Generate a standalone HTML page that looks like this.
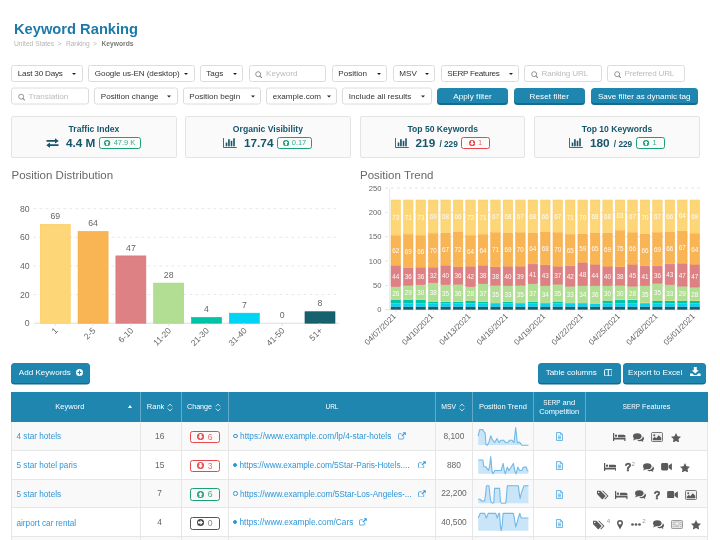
<!DOCTYPE html>
<html lang="en"><head><meta charset="utf-8"><title>Keyword Ranking</title>
<style>
*{box-sizing:border-box;margin:0;padding:0}
html,body{width:720px;height:540px;overflow:hidden;background:#fff}
body{font-family:"Liberation Sans",sans-serif;position:relative;color:#444}
.abs{position:absolute}
#w{position:absolute;left:0;top:0;width:720px;height:540px;overflow:hidden;will-change:transform}
.icn{position:absolute;line-height:0}
.icn svg{display:block}
.title{left:14px;top:18.5px;font-size:14.7px;font-weight:bold;color:#1b7aa9;line-height:20px;white-space:nowrap}
.crumb{left:14px;top:39px;font-size:6.7px;color:#b5b5b5;line-height:9px;white-space:pre}
.crumb b{color:#7a7a7a;font-weight:bold}
.fb{position:absolute;height:17px;border:1px solid #dcdcdc;border-radius:2.5px;background:#fff;font-size:8.1px;line-height:16.700px;color:#333;white-space:nowrap;padding-left:5.8px}
.fb i{position:absolute;right:5.4px;top:6.900px;width:0;height:0;border-left:2.4px solid transparent;border-right:2.4px solid transparent;border-top:2.8px solid #222}
.fb.in{color:#bbb;padding-left:16.5px}
.fb.in svg{position:absolute;left:5.600px;top:4.700px}
.btn{position:absolute;height:17px;border-radius:3.500px;background:#1f86b0;box-shadow:0 1.5px 0 #166a8d;color:#fff;font-size:8.100px;line-height:16px;text-align:center;white-space:nowrap}
.kpi{position:absolute;top:116px;height:41.5px;width:165.4px;border:1px solid #e4e4e4;border-radius:2px;background:#fafafa}
.kpi .t{position:absolute;left:0;right:0;top:7px;text-align:center;font-size:8.6px;font-weight:bold;color:#16566a;line-height:10px}
.kpi .v{position:absolute;left:0;right:0;top:19px;height:14px;text-align:center;white-space:nowrap;font-size:0}
.kpi .v>*{display:inline-block;vertical-align:middle}
.kpi .num{font-size:11.8px;font-weight:bold;color:#16566a;line-height:14px}
.kpi .sub{font-size:8.3px;font-weight:bold;color:#16566a;line-height:14px;margin-left:4.2px;position:relative;top:1px}
.bdg{display:inline-block;height:11.5px;border:1.4px solid #1aa179;border-radius:2.5px;color:#35ad8c;font-size:7.5px;line-height:10.300px;padding:0 5px 0 4.500px;margin-left:3.5px;background:transparent;white-space:nowrap;min-width:29px;text-align:center}
.bdg svg{vertical-align:middle;margin-right:3px;position:relative;top:-0.5px}
.bdg.r{border-color:#e8474c;color:#ec6a6e}
.bdg.g{border-color:#555;color:#888}
.h2{position:absolute;font-size:11.500px;color:#686868;line-height:14px;white-space:nowrap}
.th{color:#fff;font-size:7.5px;line-height:30px;text-align:center;white-space:nowrap}
.td{font-size:8.1px;line-height:12px;white-space:nowrap}
</style></head>
<body>
<div id="w">
<div class="abs title">Keyword Ranking</div>
<div class="abs crumb">United States</div><div class="abs crumb" style="left:57.5px">&gt;</div><div class="abs crumb" style="left:66px;letter-spacing:-0.15px">Ranking</div><div class="abs crumb" style="left:93px">&gt;</div><div class="abs crumb" style="left:101.5px"><b>Keywords</b></div>
<div class="fb" style="left:11.0px;top:65px;width:71.5px"><span style="letter-spacing:-0.2px">Last 30 Days</span><i></i></div>
<div class="fb" style="left:88.0px;top:65px;width:106.5px"><span style="letter-spacing:-0.09px">Google us-EN (desktop)</span><i></i></div>
<div class="fb" style="left:199.5px;top:65px;width:43.5px">Tags<i></i></div>
<div class="fb in" style="left:248.5px;top:65px;width:77.5px"><svg width="7.4" height="7.4" viewBox="0 0 14 14"><circle cx="6" cy="6" r="4.7" fill="none" stroke="#888" stroke-width="1.7"/><path d="M9.6 9.6L13 13" stroke="#888" stroke-width="2" stroke-linecap="round"/></svg>Keyword</div>
<div class="fb" style="left:331.5px;top:65px;width:55.5px">Position<i></i></div>
<div class="fb" style="left:392.5px;top:65px;width:42.5px">MSV<i></i></div>
<div class="fb" style="left:440.5px;top:65px;width:78.5px"><span style="letter-spacing:-0.300px">SERP Features</span><i></i></div>
<div class="fb in" style="left:524.0px;top:65px;width:78.0px"><svg width="7.4" height="7.4" viewBox="0 0 14 14"><circle cx="6" cy="6" r="4.7" fill="none" stroke="#888" stroke-width="1.7"/><path d="M9.6 9.6L13 13" stroke="#888" stroke-width="2" stroke-linecap="round"/></svg><span style="letter-spacing:-0.150px">Ranking URL</span></div>
<div class="fb in" style="left:607.0px;top:65px;width:78.0px"><svg width="7.4" height="7.4" viewBox="0 0 14 14"><circle cx="6" cy="6" r="4.7" fill="none" stroke="#888" stroke-width="1.7"/><path d="M9.6 9.6L13 13" stroke="#888" stroke-width="2" stroke-linecap="round"/></svg><span style="letter-spacing:-0.200px">Preferred URL</span></div>
<div class="fb in" style="left:11.0px;top:87px;width:77.5px;transform:translateY(0.5px)"><svg width="7.4" height="7.4" viewBox="0 0 14 14"><circle cx="6" cy="6" r="4.7" fill="none" stroke="#888" stroke-width="1.7"/><path d="M9.6 9.6L13 13" stroke="#888" stroke-width="2" stroke-linecap="round"/></svg>Translation</div>
<div class="fb" style="left:94.0px;top:87px;width:83.5px;transform:translateY(0.5px)">Position change<i></i></div>
<div class="fb" style="left:182.5px;top:87px;width:78.5px;transform:translateY(0.5px)">Position begin<i></i></div>
<div class="fb" style="left:266.0px;top:87px;width:71.0px;transform:translateY(0.5px)">example.com<i></i></div>
<div class="fb" style="left:342.0px;top:87px;width:89.5px;transform:translateY(0.5px)">Include all results<i></i></div>
<div class="btn" style="left:437.0px;top:88px;width:71.0px;height:15px;line-height:17px;box-shadow:0 2px 0 #166a8d"><span style="letter-spacing:0.050px">Apply filter</span></div>
<div class="btn" style="left:514.0px;top:88px;width:70.5px;height:15px;line-height:17px;box-shadow:0 2px 0 #166a8d"><span style="letter-spacing:0.050px">Reset filter</span></div>
<div class="btn" style="left:591.0px;top:88px;width:106.5px;height:15px;line-height:17px;box-shadow:0 2px 0 #166a8d">Save filter as dynamic tag</div>
<div class="kpi" style="left:11.2px"><div class="t">Traffic Index</div><div class="v"><svg width="13" height="10" viewBox="0 0 26 20"><path d="M1 4H18V0.500L25.500 5.750 18 11V7.500H1zM25 12.500H8V9L0.500 14.250 8 19.500V16H25z" fill="#16566a"/></svg><span class="num" style="margin-left:6.5px">4.4 M</span><span class="bdg "><svg width="6.2" height="6.2" viewBox="0 0 14 14"><circle cx="7" cy="7" r="7" fill="#1aa179"/><path d="M7 2L12 7H9.200V12H4.800V7H2Z" fill="#fff" transform="rotate(0 7 7)"/></svg>47.9 K</span></div></div>
<div class="kpi" style="left:185.2px"><div class="t">Organic Visibility</div><div class="v"><svg width="14" height="10" viewBox="0 0 28 20"><path d="M1 0V19H27.500" fill="none" stroke="#16566a" stroke-width="1.700"/><rect x="5.400" y="9" width="3.200" height="7.600" fill="#16566a"/><rect x="10.200" y="2.400" width="3.300" height="14.200" fill="#16566a"/><rect x="15.400" y="5.600" width="3.200" height="11" fill="#16566a"/><rect x="20.400" y="0.600" width="3.200" height="16" fill="#16566a"/></svg><span class="num" style="margin-left:6.5px">17.74</span><span class="bdg "><svg width="6.2" height="6.2" viewBox="0 0 14 14"><circle cx="7" cy="7" r="7" fill="#1aa179"/><path d="M7 2L12 7H9.200V12H4.800V7H2Z" fill="#fff" transform="rotate(0 7 7)"/></svg>0.17</span></div></div>
<div class="kpi" style="left:360.0px"><div class="t">Top 50 Keywords</div><div class="v"><svg width="14" height="10" viewBox="0 0 28 20"><path d="M1 0V19H27.500" fill="none" stroke="#16566a" stroke-width="1.700"/><rect x="5.400" y="9" width="3.200" height="7.600" fill="#16566a"/><rect x="10.200" y="2.400" width="3.300" height="14.200" fill="#16566a"/><rect x="15.400" y="5.600" width="3.200" height="11" fill="#16566a"/><rect x="20.400" y="0.600" width="3.200" height="16" fill="#16566a"/></svg><span class="num" style="margin-left:6.5px">219</span><span class="sub">/ 229</span><span class="bdg r"><svg width="6.2" height="6.2" viewBox="0 0 14 14"><circle cx="7" cy="7" r="7" fill="#e8474c"/><path d="M7 2L12 7H9.200V12H4.800V7H2Z" fill="#fff" transform="rotate(180 7 7)"/></svg>1</span></div></div>
<div class="kpi" style="left:534.4px"><div class="t">Top 10 Keywords</div><div class="v"><svg width="14" height="10" viewBox="0 0 28 20"><path d="M1 0V19H27.500" fill="none" stroke="#16566a" stroke-width="1.700"/><rect x="5.400" y="9" width="3.200" height="7.600" fill="#16566a"/><rect x="10.200" y="2.400" width="3.300" height="14.200" fill="#16566a"/><rect x="15.400" y="5.600" width="3.200" height="11" fill="#16566a"/><rect x="20.400" y="0.600" width="3.200" height="16" fill="#16566a"/></svg><span class="num" style="margin-left:6.5px">180</span><span class="sub">/ 229</span><span class="bdg "><svg width="6.2" height="6.2" viewBox="0 0 14 14"><circle cx="7" cy="7" r="7" fill="#1aa179"/><path d="M7 2L12 7H9.200V12H4.800V7H2Z" fill="#fff" transform="rotate(0 7 7)"/></svg>1</span></div></div>
<div class="h2" style="left:11.5px;top:167.700px">Position Distribution</div>
<div class="h2" style="left:360px;top:167.700px">Position Trend</div>
<svg class="abs" style="left:0;top:185px" width="360" height="170" viewBox="0 185 360 170" font-family='"Liberation Sans", sans-serif'><line x1="33.3" x2="339" y1="294.56" y2="294.56" stroke="#e9e9e9" stroke-width="1" stroke-dasharray="3 3"/><line x1="33.3" x2="339" y1="265.93" y2="265.93" stroke="#e9e9e9" stroke-width="1" stroke-dasharray="3 3"/><line x1="33.3" x2="339" y1="237.29" y2="237.29" stroke="#e9e9e9" stroke-width="1" stroke-dasharray="3 3"/><line x1="33.3" x2="339" y1="208.65" y2="208.65" stroke="#e9e9e9" stroke-width="1" stroke-dasharray="3 3"/><line x1="34" x2="339" y1="323.2" y2="323.2" stroke="#ddd" stroke-width="1"/><text x="29.6" y="326.30" text-anchor="end" font-size="8.7" fill="#666">0</text><text x="29.6" y="297.66" text-anchor="end" font-size="8.7" fill="#666">20</text><text x="29.6" y="269.03" text-anchor="end" font-size="8.7" fill="#666">40</text><text x="29.6" y="240.39" text-anchor="end" font-size="8.7" fill="#666">60</text><text x="29.6" y="211.75" text-anchor="end" font-size="8.7" fill="#666">80</text><rect x="40.25" y="224.40" width="30" height="98.80" fill="#fdd678" stroke="#fbc95a" stroke-width="0.6"/><text x="55.25" y="219.10" text-anchor="middle" font-size="8.7" fill="#666">69</text><line x1="55.25" x2="55.25" y1="323.2" y2="325.7" stroke="#ddd" stroke-width="1"/><text transform="translate(58.25,331.20) rotate(-45)" text-anchor="end" font-size="8.5" fill="#666">1</text><rect x="78.07" y="231.56" width="30" height="91.64" fill="#f9b454" stroke="#f5a435" stroke-width="0.6"/><text x="93.07" y="226.26" text-anchor="middle" font-size="8.7" fill="#666">64</text><line x1="93.07" x2="93.07" y1="323.2" y2="325.7" stroke="#ddd" stroke-width="1"/><text transform="translate(96.07,331.20) rotate(-45)" text-anchor="end" font-size="8.5" fill="#666">2-5</text><rect x="115.89" y="255.90" width="30" height="67.30" fill="#de8184" stroke="#d66e72" stroke-width="0.6"/><text x="130.89" y="250.60" text-anchor="middle" font-size="8.7" fill="#666">47</text><line x1="130.89" x2="130.89" y1="323.2" y2="325.7" stroke="#ddd" stroke-width="1"/><text transform="translate(133.89,331.20) rotate(-45)" text-anchor="end" font-size="8.5" fill="#666">6-10</text><rect x="153.71" y="283.11" width="30" height="40.09" fill="#b1de93" stroke="#a0d57d" stroke-width="0.6"/><text x="168.71" y="277.81" text-anchor="middle" font-size="8.7" fill="#666">28</text><line x1="168.71" x2="168.71" y1="323.2" y2="325.7" stroke="#ddd" stroke-width="1"/><text transform="translate(171.71,331.20) rotate(-45)" text-anchor="end" font-size="8.5" fill="#666">11-20</text><rect x="191.53" y="317.47" width="30" height="5.73" fill="#00c3a7" stroke="#00b79c" stroke-width="0.6"/><text x="206.53" y="312.17" text-anchor="middle" font-size="8.7" fill="#666">4</text><line x1="206.53" x2="206.53" y1="323.2" y2="325.7" stroke="#ddd" stroke-width="1"/><text transform="translate(209.53,331.20) rotate(-45)" text-anchor="end" font-size="8.5" fill="#666">21-30</text><rect x="229.35" y="313.18" width="30" height="10.02" fill="#00d4f4" stroke="#00c6e6" stroke-width="0.6"/><text x="244.35" y="307.88" text-anchor="middle" font-size="8.7" fill="#666">7</text><line x1="244.35" x2="244.35" y1="323.2" y2="325.7" stroke="#ddd" stroke-width="1"/><text transform="translate(247.35,331.20) rotate(-45)" text-anchor="end" font-size="8.5" fill="#666">31-40</text><text x="282.17" y="317.90" text-anchor="middle" font-size="8.7" fill="#666">0</text><line x1="282.17" x2="282.17" y1="323.2" y2="325.7" stroke="#ddd" stroke-width="1"/><text transform="translate(285.17,331.20) rotate(-45)" text-anchor="end" font-size="8.5" fill="#666">41-50</text><rect x="304.99" y="311.75" width="30" height="11.45" fill="#17616f" stroke="#12505c" stroke-width="0.6"/><text x="319.99" y="306.44" text-anchor="middle" font-size="8.7" fill="#666">8</text><line x1="319.99" x2="319.99" y1="323.2" y2="325.7" stroke="#ddd" stroke-width="1"/><text transform="translate(322.99,331.20) rotate(-45)" text-anchor="end" font-size="8.5" fill="#666">51+</text></svg>
<svg class="abs" style="left:355px;top:180px" width="365" height="175" viewBox="355 180 365 175" font-family='"Liberation Sans", sans-serif'><line x1="385" x2="700" y1="285.36" y2="285.36" stroke="#dfe4ec" stroke-width="1" stroke-dasharray="3 3"/><line x1="385" x2="700" y1="261.02" y2="261.02" stroke="#dfe4ec" stroke-width="1" stroke-dasharray="3 3"/><line x1="385" x2="700" y1="236.68" y2="236.68" stroke="#dfe4ec" stroke-width="1" stroke-dasharray="3 3"/><line x1="385" x2="700" y1="212.34" y2="212.34" stroke="#dfe4ec" stroke-width="1" stroke-dasharray="3 3"/><line x1="385" x2="700" y1="188.00" y2="188.00" stroke="#dfe4ec" stroke-width="1" stroke-dasharray="3 3"/><line x1="389.7" x2="389.7" y1="188" y2="309.7" stroke="#e3e8ee" stroke-width="1"/><line x1="385" x2="700" y1="309.7" y2="309.7" stroke="#e3e3e3" stroke-width="1"/><text x="381.5" y="312.30" text-anchor="end" font-size="7.6" fill="#666">0</text><text x="381.5" y="287.96" text-anchor="end" font-size="7.6" fill="#666">50</text><text x="381.5" y="263.62" text-anchor="end" font-size="7.6" fill="#666">100</text><text x="381.5" y="239.28" text-anchor="end" font-size="7.6" fill="#666">150</text><text x="381.5" y="214.94" text-anchor="end" font-size="7.6" fill="#666">200</text><text x="381.5" y="190.60" text-anchor="end" font-size="7.6" fill="#666">250</text><rect x="390.80" y="306.49" width="10" height="3.21" fill="#17616f"/><rect x="390.80" y="303.47" width="10" height="3.02" fill="#00d4f4"/><rect x="390.80" y="299.53" width="10" height="3.94" fill="#00c3a7"/><rect x="391.05" y="287.12" width="9.500" height="12.16" fill="#b1de93" stroke="#a1d681" stroke-width="0.500"/><rect x="390.80" y="298.83" width="10" height="0.7" fill="#dfe28f"/><text x="395.80" y="296.00" text-anchor="middle" font-size="6.3" fill="#fff" fill-opacity="0.95">26</text><rect x="391.05" y="265.70" width="9.500" height="20.92" fill="#de8184" stroke="#d86f73" stroke-width="0.500"/><text x="395.80" y="278.96" text-anchor="middle" font-size="6.3" fill="#fff" fill-opacity="0.95">44</text><rect x="391.05" y="235.52" width="9.500" height="29.68" fill="#f9b454" stroke="#f6a63c" stroke-width="0.500"/><text x="395.80" y="253.16" text-anchor="middle" font-size="6.3" fill="#fff" fill-opacity="0.95">62</text><rect x="391.05" y="199.98" width="9.500" height="35.04" fill="#fdd678" stroke="#fbc95c" stroke-width="0.500"/><text x="395.80" y="220.30" text-anchor="middle" font-size="6.3" fill="#fff" fill-opacity="0.95">73</text><line x1="395.80" x2="395.80" y1="309.7" y2="312.2" stroke="#e3e3e3" stroke-width="1"/><text transform="translate(396.50,316.90) rotate(-45)" text-anchor="end" font-size="8.100" fill="#666">04/07/2021</text><rect x="403.26" y="306.49" width="10" height="3.21" fill="#17616f"/><rect x="403.26" y="303.47" width="10" height="3.02" fill="#00d4f4"/><rect x="403.26" y="299.53" width="10" height="3.94" fill="#00c3a7"/><rect x="403.51" y="285.66" width="9.500" height="13.62" fill="#b1de93" stroke="#a1d681" stroke-width="0.500"/><rect x="403.26" y="298.83" width="10" height="0.7" fill="#dfe28f"/><text x="408.26" y="295.27" text-anchor="middle" font-size="6.3" fill="#fff" fill-opacity="0.95">29</text><rect x="403.51" y="268.13" width="9.500" height="17.02" fill="#de8184" stroke="#d86f73" stroke-width="0.500"/><text x="408.26" y="279.45" text-anchor="middle" font-size="6.3" fill="#fff" fill-opacity="0.95">36</text><rect x="403.51" y="234.54" width="9.500" height="33.09" fill="#f9b454" stroke="#f6a63c" stroke-width="0.500"/><text x="408.26" y="253.89" text-anchor="middle" font-size="6.3" fill="#fff" fill-opacity="0.95">69</text><rect x="403.51" y="199.98" width="9.500" height="34.06" fill="#fdd678" stroke="#fbc95c" stroke-width="0.500"/><text x="408.26" y="219.81" text-anchor="middle" font-size="6.3" fill="#fff" fill-opacity="0.95">71</text><rect x="415.72" y="306.49" width="10" height="3.21" fill="#17616f"/><rect x="415.72" y="303.47" width="10" height="3.02" fill="#00d4f4"/><rect x="415.72" y="299.53" width="10" height="3.94" fill="#00c3a7"/><rect x="415.97" y="285.17" width="9.500" height="14.10" fill="#b1de93" stroke="#a1d681" stroke-width="0.500"/><rect x="415.72" y="298.83" width="10" height="0.7" fill="#dfe28f"/><text x="420.72" y="295.02" text-anchor="middle" font-size="6.3" fill="#fff" fill-opacity="0.95">30</text><rect x="415.97" y="267.65" width="9.500" height="17.02" fill="#de8184" stroke="#d86f73" stroke-width="0.500"/><text x="420.72" y="278.96" text-anchor="middle" font-size="6.3" fill="#fff" fill-opacity="0.95">36</text><rect x="415.97" y="235.52" width="9.500" height="31.63" fill="#f9b454" stroke="#f6a63c" stroke-width="0.500"/><text x="420.72" y="254.13" text-anchor="middle" font-size="6.3" fill="#fff" fill-opacity="0.95">66</text><rect x="415.97" y="199.98" width="9.500" height="35.04" fill="#fdd678" stroke="#fbc95c" stroke-width="0.500"/><text x="420.72" y="220.30" text-anchor="middle" font-size="6.3" fill="#fff" fill-opacity="0.95">73</text><rect x="428.17" y="306.49" width="10" height="3.21" fill="#17616f"/><rect x="428.17" y="303.47" width="10" height="3.02" fill="#00d4f4"/><rect x="428.17" y="301.47" width="10" height="2.00" fill="#00c3a7"/><rect x="428.42" y="283.22" width="9.500" height="18.00" fill="#b1de93" stroke="#a1d681" stroke-width="0.500"/><rect x="428.17" y="300.77" width="10" height="0.7" fill="#dfe28f"/><text x="433.17" y="295.02" text-anchor="middle" font-size="6.3" fill="#fff" fill-opacity="0.95">38</text><rect x="428.42" y="267.65" width="9.500" height="15.08" fill="#de8184" stroke="#d86f73" stroke-width="0.500"/><text x="433.17" y="277.99" text-anchor="middle" font-size="6.3" fill="#fff" fill-opacity="0.95">32</text><rect x="428.42" y="233.57" width="9.500" height="33.58" fill="#f9b454" stroke="#f6a63c" stroke-width="0.500"/><text x="433.17" y="253.16" text-anchor="middle" font-size="6.3" fill="#fff" fill-opacity="0.95">70</text><rect x="428.42" y="199.98" width="9.500" height="33.09" fill="#fdd678" stroke="#fbc95c" stroke-width="0.500"/><text x="433.17" y="219.33" text-anchor="middle" font-size="6.3" fill="#fff" fill-opacity="0.95">69</text><line x1="433.17" x2="433.17" y1="309.7" y2="312.2" stroke="#e3e3e3" stroke-width="1"/><text transform="translate(433.87,316.90) rotate(-45)" text-anchor="end" font-size="8.100" fill="#666">04/10/2021</text><rect x="440.63" y="306.49" width="10" height="3.21" fill="#17616f"/><rect x="440.63" y="303.47" width="10" height="3.02" fill="#00d4f4"/><rect x="440.63" y="301.96" width="10" height="1.51" fill="#00c3a7"/><rect x="440.88" y="285.17" width="9.500" height="16.54" fill="#b1de93" stroke="#a1d681" stroke-width="0.500"/><rect x="440.63" y="301.26" width="10" height="0.7" fill="#dfe28f"/><text x="445.63" y="296.24" text-anchor="middle" font-size="6.3" fill="#fff" fill-opacity="0.95">35</text><rect x="440.88" y="265.70" width="9.500" height="18.97" fill="#de8184" stroke="#d86f73" stroke-width="0.500"/><text x="445.63" y="277.99" text-anchor="middle" font-size="6.3" fill="#fff" fill-opacity="0.95">40</text><rect x="440.88" y="233.08" width="9.500" height="32.12" fill="#f9b454" stroke="#f6a63c" stroke-width="0.500"/><text x="445.63" y="251.94" text-anchor="middle" font-size="6.3" fill="#fff" fill-opacity="0.95">67</text><rect x="440.88" y="199.98" width="9.500" height="32.60" fill="#fdd678" stroke="#fbc95c" stroke-width="0.500"/><text x="445.63" y="219.08" text-anchor="middle" font-size="6.3" fill="#fff" fill-opacity="0.95">68</text><rect x="453.09" y="306.49" width="10" height="3.21" fill="#17616f"/><rect x="453.09" y="303.47" width="10" height="3.02" fill="#00d4f4"/><rect x="453.09" y="301.96" width="10" height="1.51" fill="#00c3a7"/><rect x="453.34" y="284.69" width="9.500" height="17.02" fill="#b1de93" stroke="#a1d681" stroke-width="0.500"/><rect x="453.09" y="301.26" width="10" height="0.7" fill="#dfe28f"/><text x="458.09" y="296.00" text-anchor="middle" font-size="6.3" fill="#fff" fill-opacity="0.95">36</text><rect x="453.34" y="267.16" width="9.500" height="17.02" fill="#de8184" stroke="#d86f73" stroke-width="0.500"/><text x="458.09" y="278.47" text-anchor="middle" font-size="6.3" fill="#fff" fill-opacity="0.95">36</text><rect x="453.34" y="232.11" width="9.500" height="34.55" fill="#f9b454" stroke="#f6a63c" stroke-width="0.500"/><text x="458.09" y="252.19" text-anchor="middle" font-size="6.3" fill="#fff" fill-opacity="0.95">72</text><rect x="453.34" y="199.98" width="9.500" height="31.63" fill="#fdd678" stroke="#fbc95c" stroke-width="0.500"/><text x="458.09" y="218.60" text-anchor="middle" font-size="6.3" fill="#fff" fill-opacity="0.95">66</text><rect x="465.55" y="306.49" width="10" height="3.21" fill="#17616f"/><rect x="465.55" y="303.47" width="10" height="3.02" fill="#00d4f4"/><rect x="465.55" y="300.50" width="10" height="2.97" fill="#00c3a7"/><rect x="465.80" y="287.12" width="9.500" height="13.13" fill="#b1de93" stroke="#a1d681" stroke-width="0.500"/><rect x="465.55" y="299.80" width="10" height="0.7" fill="#dfe28f"/><text x="470.55" y="296.48" text-anchor="middle" font-size="6.3" fill="#fff" fill-opacity="0.95">28</text><rect x="465.80" y="266.67" width="9.500" height="19.95" fill="#de8184" stroke="#d86f73" stroke-width="0.500"/><text x="470.55" y="279.45" text-anchor="middle" font-size="6.3" fill="#fff" fill-opacity="0.95">42</text><rect x="465.80" y="235.52" width="9.500" height="30.66" fill="#f9b454" stroke="#f6a63c" stroke-width="0.500"/><text x="470.55" y="253.65" text-anchor="middle" font-size="6.3" fill="#fff" fill-opacity="0.95">64</text><rect x="465.80" y="199.98" width="9.500" height="35.04" fill="#fdd678" stroke="#fbc95c" stroke-width="0.500"/><text x="470.55" y="220.30" text-anchor="middle" font-size="6.3" fill="#fff" fill-opacity="0.95">73</text><line x1="470.55" x2="470.55" y1="309.7" y2="312.2" stroke="#e3e3e3" stroke-width="1"/><text transform="translate(471.25,316.90) rotate(-45)" text-anchor="end" font-size="8.100" fill="#666">04/13/2021</text><rect x="478.01" y="306.49" width="10" height="3.21" fill="#17616f"/><rect x="478.01" y="303.47" width="10" height="3.02" fill="#00d4f4"/><rect x="478.01" y="301.96" width="10" height="1.51" fill="#00c3a7"/><rect x="478.26" y="284.20" width="9.500" height="17.51" fill="#b1de93" stroke="#a1d681" stroke-width="0.500"/><rect x="478.01" y="301.26" width="10" height="0.7" fill="#dfe28f"/><text x="483.01" y="295.75" text-anchor="middle" font-size="6.3" fill="#fff" fill-opacity="0.95">37</text><rect x="478.26" y="265.70" width="9.500" height="18.00" fill="#de8184" stroke="#d86f73" stroke-width="0.500"/><text x="483.01" y="277.50" text-anchor="middle" font-size="6.3" fill="#fff" fill-opacity="0.95">38</text><rect x="478.26" y="234.54" width="9.500" height="30.66" fill="#f9b454" stroke="#f6a63c" stroke-width="0.500"/><text x="483.01" y="252.67" text-anchor="middle" font-size="6.3" fill="#fff" fill-opacity="0.95">64</text><rect x="478.26" y="199.98" width="9.500" height="34.06" fill="#fdd678" stroke="#fbc95c" stroke-width="0.500"/><text x="483.01" y="219.81" text-anchor="middle" font-size="6.3" fill="#fff" fill-opacity="0.95">71</text><rect x="490.46" y="306.49" width="10" height="3.21" fill="#17616f"/><rect x="490.46" y="303.47" width="10" height="3.02" fill="#00d4f4"/><rect x="490.46" y="302.45" width="10" height="1.02" fill="#00c3a7"/><rect x="490.71" y="285.66" width="9.500" height="16.54" fill="#b1de93" stroke="#a1d681" stroke-width="0.500"/><rect x="490.46" y="301.75" width="10" height="0.7" fill="#dfe28f"/><text x="495.46" y="296.73" text-anchor="middle" font-size="6.3" fill="#fff" fill-opacity="0.95">35</text><rect x="490.71" y="267.16" width="9.500" height="18.00" fill="#de8184" stroke="#d86f73" stroke-width="0.500"/><text x="495.46" y="278.96" text-anchor="middle" font-size="6.3" fill="#fff" fill-opacity="0.95">38</text><rect x="490.71" y="232.60" width="9.500" height="34.06" fill="#f9b454" stroke="#f6a63c" stroke-width="0.500"/><text x="495.46" y="252.43" text-anchor="middle" font-size="6.3" fill="#fff" fill-opacity="0.95">71</text><rect x="490.71" y="199.98" width="9.500" height="32.12" fill="#fdd678" stroke="#fbc95c" stroke-width="0.500"/><text x="495.46" y="218.84" text-anchor="middle" font-size="6.3" fill="#fff" fill-opacity="0.95">67</text><rect x="502.92" y="306.49" width="10" height="3.21" fill="#17616f"/><rect x="502.92" y="303.47" width="10" height="3.02" fill="#00d4f4"/><rect x="502.92" y="301.96" width="10" height="1.51" fill="#00c3a7"/><rect x="503.17" y="286.15" width="9.500" height="15.56" fill="#b1de93" stroke="#a1d681" stroke-width="0.500"/><rect x="502.92" y="301.26" width="10" height="0.7" fill="#dfe28f"/><text x="507.92" y="296.73" text-anchor="middle" font-size="6.3" fill="#fff" fill-opacity="0.95">33</text><rect x="503.17" y="266.67" width="9.500" height="18.97" fill="#de8184" stroke="#d86f73" stroke-width="0.500"/><text x="507.92" y="278.96" text-anchor="middle" font-size="6.3" fill="#fff" fill-opacity="0.95">40</text><rect x="503.17" y="233.08" width="9.500" height="33.09" fill="#f9b454" stroke="#f6a63c" stroke-width="0.500"/><text x="507.92" y="252.43" text-anchor="middle" font-size="6.3" fill="#fff" fill-opacity="0.95">69</text><rect x="503.17" y="199.98" width="9.500" height="32.60" fill="#fdd678" stroke="#fbc95c" stroke-width="0.500"/><text x="507.92" y="219.08" text-anchor="middle" font-size="6.3" fill="#fff" fill-opacity="0.95">68</text><line x1="507.92" x2="507.92" y1="309.7" y2="312.2" stroke="#e3e3e3" stroke-width="1"/><text transform="translate(508.62,316.90) rotate(-45)" text-anchor="end" font-size="8.100" fill="#666">04/16/2021</text><rect x="515.38" y="306.49" width="10" height="3.21" fill="#17616f"/><rect x="515.38" y="303.47" width="10" height="3.02" fill="#00d4f4"/><rect x="515.38" y="302.45" width="10" height="1.02" fill="#00c3a7"/><rect x="515.63" y="285.66" width="9.500" height="16.54" fill="#b1de93" stroke="#a1d681" stroke-width="0.500"/><rect x="515.38" y="301.75" width="10" height="0.7" fill="#dfe28f"/><text x="520.38" y="296.73" text-anchor="middle" font-size="6.3" fill="#fff" fill-opacity="0.95">35</text><rect x="515.63" y="266.67" width="9.500" height="18.49" fill="#de8184" stroke="#d86f73" stroke-width="0.500"/><text x="520.38" y="278.72" text-anchor="middle" font-size="6.3" fill="#fff" fill-opacity="0.95">39</text><rect x="515.63" y="232.60" width="9.500" height="33.58" fill="#f9b454" stroke="#f6a63c" stroke-width="0.500"/><text x="520.38" y="252.19" text-anchor="middle" font-size="6.3" fill="#fff" fill-opacity="0.95">70</text><rect x="515.63" y="199.98" width="9.500" height="32.12" fill="#fdd678" stroke="#fbc95c" stroke-width="0.500"/><text x="520.38" y="218.84" text-anchor="middle" font-size="6.3" fill="#fff" fill-opacity="0.95">67</text><rect x="527.84" y="306.49" width="10" height="3.21" fill="#17616f"/><rect x="527.84" y="303.47" width="10" height="3.02" fill="#00d4f4"/><rect x="527.84" y="301.96" width="10" height="1.51" fill="#00c3a7"/><rect x="528.09" y="284.20" width="9.500" height="17.51" fill="#b1de93" stroke="#a1d681" stroke-width="0.500"/><rect x="527.84" y="301.26" width="10" height="0.7" fill="#dfe28f"/><text x="532.84" y="295.75" text-anchor="middle" font-size="6.3" fill="#fff" fill-opacity="0.95">37</text><rect x="528.09" y="264.24" width="9.500" height="19.46" fill="#de8184" stroke="#d86f73" stroke-width="0.500"/><text x="532.84" y="276.77" text-anchor="middle" font-size="6.3" fill="#fff" fill-opacity="0.95">41</text><rect x="528.09" y="233.08" width="9.500" height="30.66" fill="#f9b454" stroke="#f6a63c" stroke-width="0.500"/><text x="532.84" y="251.21" text-anchor="middle" font-size="6.3" fill="#fff" fill-opacity="0.95">64</text><rect x="528.09" y="199.98" width="9.500" height="32.60" fill="#fdd678" stroke="#fbc95c" stroke-width="0.500"/><text x="532.84" y="219.08" text-anchor="middle" font-size="6.3" fill="#fff" fill-opacity="0.95">68</text><rect x="540.30" y="306.49" width="10" height="3.21" fill="#17616f"/><rect x="540.30" y="303.47" width="10" height="3.02" fill="#00d4f4"/><rect x="540.30" y="302.45" width="10" height="1.02" fill="#00c3a7"/><rect x="540.55" y="286.15" width="9.500" height="16.05" fill="#b1de93" stroke="#a1d681" stroke-width="0.500"/><rect x="540.30" y="301.75" width="10" height="0.7" fill="#dfe28f"/><text x="545.30" y="296.97" text-anchor="middle" font-size="6.3" fill="#fff" fill-opacity="0.95">34</text><rect x="540.55" y="265.21" width="9.500" height="20.43" fill="#de8184" stroke="#d86f73" stroke-width="0.500"/><text x="545.30" y="278.23" text-anchor="middle" font-size="6.3" fill="#fff" fill-opacity="0.95">43</text><rect x="540.55" y="232.11" width="9.500" height="32.60" fill="#f9b454" stroke="#f6a63c" stroke-width="0.500"/><text x="545.30" y="251.21" text-anchor="middle" font-size="6.3" fill="#fff" fill-opacity="0.95">68</text><rect x="540.55" y="199.98" width="9.500" height="31.63" fill="#fdd678" stroke="#fbc95c" stroke-width="0.500"/><text x="545.30" y="218.60" text-anchor="middle" font-size="6.3" fill="#fff" fill-opacity="0.95">66</text><line x1="545.30" x2="545.30" y1="309.7" y2="312.2" stroke="#e3e3e3" stroke-width="1"/><text transform="translate(546.00,316.90) rotate(-45)" text-anchor="end" font-size="8.100" fill="#666">04/19/2021</text><rect x="552.75" y="306.49" width="10" height="3.21" fill="#17616f"/><rect x="552.75" y="303.47" width="10" height="3.02" fill="#00d4f4"/><rect x="552.75" y="301.47" width="10" height="2.00" fill="#00c3a7"/><rect x="553.00" y="284.69" width="9.500" height="16.54" fill="#b1de93" stroke="#a1d681" stroke-width="0.500"/><rect x="552.75" y="300.77" width="10" height="0.7" fill="#dfe28f"/><text x="557.75" y="295.75" text-anchor="middle" font-size="6.3" fill="#fff" fill-opacity="0.95">35</text><rect x="553.00" y="266.67" width="9.500" height="17.51" fill="#de8184" stroke="#d86f73" stroke-width="0.500"/><text x="557.75" y="278.23" text-anchor="middle" font-size="6.3" fill="#fff" fill-opacity="0.95">37</text><rect x="553.00" y="232.60" width="9.500" height="33.58" fill="#f9b454" stroke="#f6a63c" stroke-width="0.500"/><text x="557.75" y="252.19" text-anchor="middle" font-size="6.3" fill="#fff" fill-opacity="0.95">70</text><rect x="553.00" y="199.98" width="9.500" height="32.12" fill="#fdd678" stroke="#fbc95c" stroke-width="0.500"/><text x="557.75" y="218.84" text-anchor="middle" font-size="6.3" fill="#fff" fill-opacity="0.95">67</text><rect x="565.21" y="306.49" width="10" height="3.21" fill="#17616f"/><rect x="565.21" y="303.47" width="10" height="3.02" fill="#00d4f4"/><rect x="565.21" y="302.45" width="10" height="1.02" fill="#00c3a7"/><rect x="565.46" y="286.63" width="9.500" height="15.56" fill="#b1de93" stroke="#a1d681" stroke-width="0.500"/><rect x="565.21" y="301.75" width="10" height="0.7" fill="#dfe28f"/><text x="570.21" y="297.21" text-anchor="middle" font-size="6.3" fill="#fff" fill-opacity="0.95">33</text><rect x="565.46" y="266.19" width="9.500" height="19.95" fill="#de8184" stroke="#d86f73" stroke-width="0.500"/><text x="570.21" y="278.96" text-anchor="middle" font-size="6.3" fill="#fff" fill-opacity="0.95">42</text><rect x="565.46" y="234.54" width="9.500" height="31.14" fill="#f9b454" stroke="#f6a63c" stroke-width="0.500"/><text x="570.21" y="252.92" text-anchor="middle" font-size="6.3" fill="#fff" fill-opacity="0.95">65</text><rect x="565.46" y="199.98" width="9.500" height="34.06" fill="#fdd678" stroke="#fbc95c" stroke-width="0.500"/><text x="570.21" y="219.81" text-anchor="middle" font-size="6.3" fill="#fff" fill-opacity="0.95">71</text><rect x="577.67" y="306.49" width="10" height="3.21" fill="#17616f"/><rect x="577.67" y="303.47" width="10" height="3.02" fill="#00d4f4"/><rect x="577.67" y="302.45" width="10" height="1.02" fill="#00c3a7"/><rect x="577.92" y="286.15" width="9.500" height="16.05" fill="#b1de93" stroke="#a1d681" stroke-width="0.500"/><rect x="577.67" y="301.75" width="10" height="0.7" fill="#dfe28f"/><text x="582.67" y="296.97" text-anchor="middle" font-size="6.3" fill="#fff" fill-opacity="0.95">34</text><rect x="577.92" y="262.78" width="9.500" height="22.87" fill="#de8184" stroke="#d86f73" stroke-width="0.500"/><text x="582.67" y="277.01" text-anchor="middle" font-size="6.3" fill="#fff" fill-opacity="0.95">48</text><rect x="577.92" y="234.06" width="9.500" height="28.22" fill="#f9b454" stroke="#f6a63c" stroke-width="0.500"/><text x="582.67" y="250.97" text-anchor="middle" font-size="6.3" fill="#fff" fill-opacity="0.95">59</text><rect x="577.92" y="199.98" width="9.500" height="33.58" fill="#fdd678" stroke="#fbc95c" stroke-width="0.500"/><text x="582.67" y="219.57" text-anchor="middle" font-size="6.3" fill="#fff" fill-opacity="0.95">70</text><line x1="582.67" x2="582.67" y1="309.7" y2="312.2" stroke="#e3e3e3" stroke-width="1"/><text transform="translate(583.37,316.90) rotate(-45)" text-anchor="end" font-size="8.100" fill="#666">04/22/2021</text><rect x="590.13" y="306.49" width="10" height="3.21" fill="#17616f"/><rect x="590.13" y="303.47" width="10" height="3.02" fill="#00d4f4"/><rect x="590.13" y="303.42" width="10" height="0.05" fill="#00c3a7"/><rect x="590.38" y="286.15" width="9.500" height="17.02" fill="#b1de93" stroke="#a1d681" stroke-width="0.500"/><rect x="590.13" y="302.72" width="10" height="0.7" fill="#dfe28f"/><text x="595.13" y="297.46" text-anchor="middle" font-size="6.3" fill="#fff" fill-opacity="0.95">36</text><rect x="590.38" y="264.73" width="9.500" height="20.92" fill="#de8184" stroke="#d86f73" stroke-width="0.500"/><text x="595.13" y="277.99" text-anchor="middle" font-size="6.3" fill="#fff" fill-opacity="0.95">44</text><rect x="590.38" y="233.08" width="9.500" height="31.14" fill="#f9b454" stroke="#f6a63c" stroke-width="0.500"/><text x="595.13" y="251.46" text-anchor="middle" font-size="6.3" fill="#fff" fill-opacity="0.95">65</text><rect x="590.38" y="199.98" width="9.500" height="32.60" fill="#fdd678" stroke="#fbc95c" stroke-width="0.500"/><text x="595.13" y="219.08" text-anchor="middle" font-size="6.3" fill="#fff" fill-opacity="0.95">68</text><rect x="602.59" y="306.49" width="10" height="3.21" fill="#17616f"/><rect x="602.59" y="303.47" width="10" height="3.02" fill="#00d4f4"/><rect x="602.59" y="300.50" width="10" height="2.97" fill="#00c3a7"/><rect x="602.84" y="286.15" width="9.500" height="14.10" fill="#b1de93" stroke="#a1d681" stroke-width="0.500"/><rect x="602.59" y="299.80" width="10" height="0.7" fill="#dfe28f"/><text x="607.59" y="296.00" text-anchor="middle" font-size="6.3" fill="#fff" fill-opacity="0.95">30</text><rect x="602.84" y="266.67" width="9.500" height="18.97" fill="#de8184" stroke="#d86f73" stroke-width="0.500"/><text x="607.59" y="278.96" text-anchor="middle" font-size="6.3" fill="#fff" fill-opacity="0.95">40</text><rect x="602.84" y="233.08" width="9.500" height="33.09" fill="#f9b454" stroke="#f6a63c" stroke-width="0.500"/><text x="607.59" y="252.43" text-anchor="middle" font-size="6.3" fill="#fff" fill-opacity="0.95">69</text><rect x="602.84" y="199.98" width="9.500" height="32.60" fill="#fdd678" stroke="#fbc95c" stroke-width="0.500"/><text x="607.59" y="219.08" text-anchor="middle" font-size="6.3" fill="#fff" fill-opacity="0.95">68</text><rect x="615.04" y="306.49" width="10" height="3.21" fill="#17616f"/><rect x="615.04" y="303.47" width="10" height="3.02" fill="#00d4f4"/><rect x="615.04" y="300.01" width="10" height="3.46" fill="#00c3a7"/><rect x="615.29" y="285.66" width="9.500" height="14.10" fill="#b1de93" stroke="#a1d681" stroke-width="0.500"/><rect x="615.04" y="299.31" width="10" height="0.7" fill="#dfe28f"/><text x="620.04" y="295.51" text-anchor="middle" font-size="6.3" fill="#fff" fill-opacity="0.95">30</text><rect x="615.29" y="267.16" width="9.500" height="18.00" fill="#de8184" stroke="#d86f73" stroke-width="0.500"/><text x="620.04" y="278.96" text-anchor="middle" font-size="6.3" fill="#fff" fill-opacity="0.95">38</text><rect x="615.29" y="230.65" width="9.500" height="36.01" fill="#f9b454" stroke="#f6a63c" stroke-width="0.500"/><text x="620.04" y="251.46" text-anchor="middle" font-size="6.3" fill="#fff" fill-opacity="0.95">75</text><rect x="615.29" y="199.98" width="9.500" height="30.17" fill="#fdd678" stroke="#fbc95c" stroke-width="0.500"/><text x="620.04" y="217.87" text-anchor="middle" font-size="6.3" fill="#fff" fill-opacity="0.95">63</text><line x1="620.04" x2="620.04" y1="309.7" y2="312.2" stroke="#e3e3e3" stroke-width="1"/><text transform="translate(620.74,316.90) rotate(-45)" text-anchor="end" font-size="8.100" fill="#666">04/25/2021</text><rect x="627.50" y="306.49" width="10" height="3.21" fill="#17616f"/><rect x="627.50" y="303.47" width="10" height="3.02" fill="#00d4f4"/><rect x="627.50" y="300.01" width="10" height="3.46" fill="#00c3a7"/><rect x="627.75" y="286.63" width="9.500" height="13.13" fill="#b1de93" stroke="#a1d681" stroke-width="0.500"/><rect x="627.50" y="299.31" width="10" height="0.7" fill="#dfe28f"/><text x="632.50" y="296.00" text-anchor="middle" font-size="6.3" fill="#fff" fill-opacity="0.95">28</text><rect x="627.75" y="264.73" width="9.500" height="21.41" fill="#de8184" stroke="#d86f73" stroke-width="0.500"/><text x="632.50" y="278.23" text-anchor="middle" font-size="6.3" fill="#fff" fill-opacity="0.95">45</text><rect x="627.75" y="232.60" width="9.500" height="31.63" fill="#f9b454" stroke="#f6a63c" stroke-width="0.500"/><text x="632.50" y="251.21" text-anchor="middle" font-size="6.3" fill="#fff" fill-opacity="0.95">66</text><rect x="627.75" y="199.98" width="9.500" height="32.12" fill="#fdd678" stroke="#fbc95c" stroke-width="0.500"/><text x="632.50" y="218.84" text-anchor="middle" font-size="6.3" fill="#fff" fill-opacity="0.95">67</text><rect x="639.96" y="306.49" width="10" height="3.21" fill="#17616f"/><rect x="639.96" y="303.47" width="10" height="3.02" fill="#00d4f4"/><rect x="639.96" y="302.93" width="10" height="0.54" fill="#00c3a7"/><rect x="640.21" y="286.15" width="9.500" height="16.54" fill="#b1de93" stroke="#a1d681" stroke-width="0.500"/><rect x="639.96" y="302.23" width="10" height="0.7" fill="#dfe28f"/><text x="644.96" y="297.21" text-anchor="middle" font-size="6.3" fill="#fff" fill-opacity="0.95">35</text><rect x="640.21" y="266.19" width="9.500" height="19.46" fill="#de8184" stroke="#d86f73" stroke-width="0.500"/><text x="644.96" y="278.72" text-anchor="middle" font-size="6.3" fill="#fff" fill-opacity="0.95">41</text><rect x="640.21" y="234.06" width="9.500" height="31.63" fill="#f9b454" stroke="#f6a63c" stroke-width="0.500"/><text x="644.96" y="252.67" text-anchor="middle" font-size="6.3" fill="#fff" fill-opacity="0.95">66</text><rect x="640.21" y="199.98" width="9.500" height="33.58" fill="#fdd678" stroke="#fbc95c" stroke-width="0.500"/><text x="644.96" y="219.57" text-anchor="middle" font-size="6.3" fill="#fff" fill-opacity="0.95">70</text><rect x="652.42" y="306.49" width="10" height="3.21" fill="#17616f"/><rect x="652.42" y="303.47" width="10" height="3.02" fill="#00d4f4"/><rect x="652.42" y="300.50" width="10" height="2.97" fill="#00c3a7"/><rect x="652.67" y="283.71" width="9.500" height="16.54" fill="#b1de93" stroke="#a1d681" stroke-width="0.500"/><rect x="652.42" y="299.80" width="10" height="0.7" fill="#dfe28f"/><text x="657.42" y="294.78" text-anchor="middle" font-size="6.3" fill="#fff" fill-opacity="0.95">35</text><rect x="652.67" y="266.19" width="9.500" height="17.02" fill="#de8184" stroke="#d86f73" stroke-width="0.500"/><text x="657.42" y="277.50" text-anchor="middle" font-size="6.3" fill="#fff" fill-opacity="0.95">36</text><rect x="652.67" y="232.60" width="9.500" height="33.09" fill="#f9b454" stroke="#f6a63c" stroke-width="0.500"/><text x="657.42" y="251.94" text-anchor="middle" font-size="6.3" fill="#fff" fill-opacity="0.95">69</text><rect x="652.67" y="199.98" width="9.500" height="32.12" fill="#fdd678" stroke="#fbc95c" stroke-width="0.500"/><text x="657.42" y="218.84" text-anchor="middle" font-size="6.3" fill="#fff" fill-opacity="0.95">67</text><line x1="657.42" x2="657.42" y1="309.7" y2="312.2" stroke="#e3e3e3" stroke-width="1"/><text transform="translate(658.12,316.90) rotate(-45)" text-anchor="end" font-size="8.100" fill="#666">04/28/2021</text><rect x="664.88" y="306.49" width="10" height="3.21" fill="#17616f"/><rect x="664.88" y="303.47" width="10" height="3.02" fill="#00d4f4"/><rect x="664.88" y="300.99" width="10" height="2.48" fill="#00c3a7"/><rect x="665.13" y="285.17" width="9.500" height="15.56" fill="#b1de93" stroke="#a1d681" stroke-width="0.500"/><rect x="664.88" y="300.29" width="10" height="0.7" fill="#dfe28f"/><text x="669.88" y="295.75" text-anchor="middle" font-size="6.3" fill="#fff" fill-opacity="0.95">33</text><rect x="665.13" y="264.24" width="9.500" height="20.43" fill="#de8184" stroke="#d86f73" stroke-width="0.500"/><text x="669.88" y="277.26" text-anchor="middle" font-size="6.3" fill="#fff" fill-opacity="0.95">43</text><rect x="665.13" y="232.11" width="9.500" height="31.63" fill="#f9b454" stroke="#f6a63c" stroke-width="0.500"/><text x="669.88" y="250.73" text-anchor="middle" font-size="6.3" fill="#fff" fill-opacity="0.95">66</text><rect x="665.13" y="199.98" width="9.500" height="31.63" fill="#fdd678" stroke="#fbc95c" stroke-width="0.500"/><text x="669.88" y="218.60" text-anchor="middle" font-size="6.3" fill="#fff" fill-opacity="0.95">66</text><rect x="677.33" y="306.49" width="10" height="3.21" fill="#17616f"/><rect x="677.33" y="303.47" width="10" height="3.02" fill="#00d4f4"/><rect x="677.33" y="300.50" width="10" height="2.97" fill="#00c3a7"/><rect x="677.58" y="286.63" width="9.500" height="13.62" fill="#b1de93" stroke="#a1d681" stroke-width="0.500"/><rect x="677.33" y="299.80" width="10" height="0.7" fill="#dfe28f"/><text x="682.33" y="296.24" text-anchor="middle" font-size="6.3" fill="#fff" fill-opacity="0.95">29</text><rect x="677.58" y="263.75" width="9.500" height="22.38" fill="#de8184" stroke="#d86f73" stroke-width="0.500"/><text x="682.33" y="277.74" text-anchor="middle" font-size="6.3" fill="#fff" fill-opacity="0.95">47</text><rect x="677.58" y="231.14" width="9.500" height="32.12" fill="#f9b454" stroke="#f6a63c" stroke-width="0.500"/><text x="682.33" y="249.99" text-anchor="middle" font-size="6.3" fill="#fff" fill-opacity="0.95">67</text><rect x="677.58" y="199.98" width="9.500" height="30.66" fill="#fdd678" stroke="#fbc95c" stroke-width="0.500"/><text x="682.33" y="218.11" text-anchor="middle" font-size="6.3" fill="#fff" fill-opacity="0.95">64</text><rect x="689.79" y="306.49" width="10" height="3.21" fill="#17616f"/><rect x="689.79" y="303.47" width="10" height="3.02" fill="#00d4f4"/><rect x="689.79" y="300.99" width="10" height="2.48" fill="#00c3a7"/><rect x="690.04" y="287.61" width="9.500" height="13.13" fill="#b1de93" stroke="#a1d681" stroke-width="0.500"/><rect x="689.79" y="300.29" width="10" height="0.7" fill="#dfe28f"/><text x="694.79" y="296.97" text-anchor="middle" font-size="6.3" fill="#fff" fill-opacity="0.95">28</text><rect x="690.04" y="264.73" width="9.500" height="22.38" fill="#de8184" stroke="#d86f73" stroke-width="0.500"/><text x="694.79" y="278.72" text-anchor="middle" font-size="6.3" fill="#fff" fill-opacity="0.95">47</text><rect x="690.04" y="233.57" width="9.500" height="30.66" fill="#f9b454" stroke="#f6a63c" stroke-width="0.500"/><text x="694.79" y="251.70" text-anchor="middle" font-size="6.3" fill="#fff" fill-opacity="0.95">64</text><rect x="690.04" y="199.98" width="9.500" height="33.09" fill="#fdd678" stroke="#fbc95c" stroke-width="0.500"/><text x="694.79" y="219.33" text-anchor="middle" font-size="6.3" fill="#fff" fill-opacity="0.95">69</text><line x1="694.79" x2="694.79" y1="309.7" y2="312.2" stroke="#e3e3e3" stroke-width="1"/><text transform="translate(695.49,316.90) rotate(-45)" text-anchor="end" font-size="8.100" fill="#666">05/01/2021</text></svg>
<div class="btn" style="left:11.200px;top:363.100px;width:79.300px;height:20px;line-height:20.600px">Add Keywords<svg width="7" height="7" viewBox="0 0 14 14" style="vertical-align:middle;margin-left:5px;position:relative;top:-0.5px"><circle cx="7" cy="7" r="7" fill="#fff"/><path d="M6 3.2h2V6h2.8v2H8v2.8H6V8H3.2V6H6z" fill="#1f86b0"/></svg></div>
<div class="btn" style="left:538px;top:363.100px;width:82.5px;height:20px;line-height:20.600px"><span style="position:relative;left:-0.500px;letter-spacing:-0.050px">Table columns</span><svg width="8.600" height="7.500" viewBox="0 0 16 14" style="vertical-align:middle;margin-left:6.500px;position:relative;top:-0.300px"><rect x="1" y="1" width="14" height="12" rx="1.5" fill="none" stroke="#fff" stroke-width="1.8"/><path d="M8 1v12" stroke="#fff" stroke-width="1.8"/></svg></div>
<div class="btn" style="left:623px;top:363.100px;width:82.5px;height:20px;line-height:20.600px">Export to Excel<svg width="10.600" height="9.400" viewBox="0 0 18 16" style="vertical-align:middle;margin-left:7.500px;position:relative;top:-1.300px"><path d="M6.5 0h5v5.5H15L9 11.2 3 5.500h3.5z" fill="#fff"/><path d="M0 11h4.2l2.6 2.5h4.400L13.800 11H18v5H0z" fill="#fff"/></svg></div>
<div class="abs" style="left:11px;top:392.3px;width:697.2px;height:29.80000000000001px;background:#1f86b0"></div>
<div class="abs" style="left:11px;top:422.1px;width:697.2px;height:28.75px;background:#f9f9f9;border-bottom:1px solid #e6e6e6;border-left:1px solid #e6e6e6;border-right:1px solid #e6e6e6"></div>
<div class="abs" style="left:11px;top:450.85px;width:697.2px;height:28.75px;background:#fff;border-bottom:1px solid #e6e6e6;border-left:1px solid #e6e6e6;border-right:1px solid #e6e6e6"></div>
<div class="abs" style="left:11px;top:479.6px;width:697.2px;height:28.75px;background:#f9f9f9;border-bottom:1px solid #e6e6e6;border-left:1px solid #e6e6e6;border-right:1px solid #e6e6e6"></div>
<div class="abs" style="left:11px;top:508.35px;width:697.2px;height:28.75px;background:#fff;border-bottom:1px solid #e6e6e6;border-left:1px solid #e6e6e6;border-right:1px solid #e6e6e6"></div>
<div class="abs" style="left:11px;top:537.1px;width:697.2px;height:10px;background:#f9f9f9;border-left:1px solid #e6e6e6;border-right:1px solid #e6e6e6"></div>
<div class="abs" style="left:140.1px;top:392.3px;width:1px;height:29.80000000000001px;background:#62aac8"></div>
<div class="abs" style="left:140.1px;top:422.1px;width:1px;height:117.89999999999998px;background:#e6e6e6"></div>
<div class="abs" style="left:180.6px;top:392.3px;width:1px;height:29.80000000000001px;background:#62aac8"></div>
<div class="abs" style="left:180.6px;top:422.1px;width:1px;height:117.89999999999998px;background:#e6e6e6"></div>
<div class="abs" style="left:228.0px;top:392.3px;width:1px;height:29.80000000000001px;background:#62aac8"></div>
<div class="abs" style="left:228.0px;top:422.1px;width:1px;height:117.89999999999998px;background:#e6e6e6"></div>
<div class="abs" style="left:435.0px;top:392.3px;width:1px;height:29.80000000000001px;background:#62aac8"></div>
<div class="abs" style="left:435.0px;top:422.1px;width:1px;height:117.89999999999998px;background:#e6e6e6"></div>
<div class="abs" style="left:471.9px;top:392.3px;width:1px;height:29.80000000000001px;background:#62aac8"></div>
<div class="abs" style="left:471.9px;top:422.1px;width:1px;height:117.89999999999998px;background:#e6e6e6"></div>
<div class="abs" style="left:532.9px;top:392.3px;width:1px;height:29.80000000000001px;background:#62aac8"></div>
<div class="abs" style="left:532.9px;top:422.1px;width:1px;height:117.89999999999998px;background:#e6e6e6"></div>
<div class="abs" style="left:584.5px;top:392.3px;width:1px;height:29.80000000000001px;background:#62aac8"></div>
<div class="abs" style="left:584.5px;top:422.1px;width:1px;height:117.89999999999998px;background:#e6e6e6"></div>
<div class="abs th" style="left:11px;top:392.3px;width:129.6px;height:29.80000000000001px;"><span style="position:relative;left:-6px">Keyword</span><i style="position:absolute;right:8.500px;top:12.500px;width:0;height:0;border-left:2.800px solid transparent;border-right:2.800px solid transparent;border-bottom:3.200px solid #fff"></i></div>
<div class="abs th" style="left:140.6px;top:392.3px;width:40.5px;height:29.80000000000001px;">Rank<svg width="6" height="9" viewBox="0 0 12 18" style="vertical-align:middle;margin-left:3px;margin-right:1.500px;position:relative;top:-0.300px"><path d="M1.500 7L6 2l4.500 5M1.500 11L6 16l4.500-5" fill="none" stroke="#fff" stroke-width="1.600" stroke-opacity="0.900"/></svg></div>
<div class="abs th" style="left:181.1px;top:392.3px;width:47.400000000000006px;height:29.80000000000001px;"><span style="font-size:7.200px">Change</span><svg width="6" height="9" viewBox="0 0 12 18" style="vertical-align:middle;margin-left:3px;margin-right:1.500px;position:relative;top:-0.300px"><path d="M1.500 7L6 2l4.500 5M1.500 11L6 16l4.500-5" fill="none" stroke="#fff" stroke-width="1.600" stroke-opacity="0.900"/></svg></div>
<div class="abs th" style="left:228.5px;top:392.3px;width:207.0px;height:29.80000000000001px;"><span style="font-size:6.500px">URL</span></div>
<div class="abs th" style="left:435.5px;top:392.3px;width:36.89999999999998px;height:29.80000000000001px;"><span style="font-size:6.900px">MSV</span><svg width="6" height="9" viewBox="0 0 12 18" style="vertical-align:middle;margin-left:3px;margin-right:1.500px;position:relative;top:-0.300px"><path d="M1.500 7L6 2l4.500 5M1.500 11L6 16l4.500-5" fill="none" stroke="#fff" stroke-width="1.600" stroke-opacity="0.900"/></svg></div>
<div class="abs th" style="left:472.4px;top:392.3px;width:61.0px;height:29.80000000000001px;">Position Trend</div>
<div class="abs th" style="left:533.4px;top:392.3px;width:51.60000000000002px;height:29.80000000000001px;"><span style="display:inline-block;line-height:9.8px;vertical-align:middle"><span style="font-size:6.300px">SERP</span> and<br>Competition</span></div>
<div class="abs th" style="left:585.0px;top:392.3px;width:123.20000000000005px;height:29.80000000000001px;"><span style="font-size:6.300px">SERP</span> <span style="font-size:7.200px">Features</span></div>
<div class="abs td" style="left:16.5px;top:431.38px;color:#2f97d8;font-size:8.200px">4 star hotels</div>
<div class="abs td" style="left:139.4px;width:40.5px;top:429.98px;text-align:center;color:#666;font-size:8.400px">16</div>
<div class="abs bdg r" style="left:190.300px;top:430.78px;margin:0;width:30px;min-width:0;height:12.500px;padding:0;border-width:1.300px;font-size:8.600px;line-height:10.400px;text-align:left"><span class="icn" style="left:5.40px;top:1.92px"><svg width="7" height="7" viewBox="0 0 14 14"><circle cx="7" cy="7" r="7" fill="#e8474c"/><path d="M7 2L12 7H9.200V12H4.800V7H2Z" fill="#fff" transform="rotate(180 7 7)"/></svg></span><span style="position:absolute;left:16.500px;top:0">6</span></div>
<div class="abs td" style="left:233.3px;top:430.08px;color:#2f97d8;font-size:8.3px;letter-spacing:0px"><span style="display:inline-block;width:4.6px;height:4.6px;border-radius:50%;border:1.200px solid #2f97d8;background:transparent;margin-right:2.200px;position:relative;top:-0.900px"></span>https://www.example.com/lp/4-star-hotels</div>
<div class="icn" style="left:397.6px;top:432.18px"><svg width="8" height="7.500" viewBox="0 0 16 15"><path d="M11.500 8.500v4a1.500 1.500 0 0 1-1.500 1.500H2.500A1.500 1.500 0 0 1 1 12.500V5a1.500 1.500 0 0 1 1.500-1.500h5" fill="none" stroke="#2f97d8" stroke-width="1.500"/><path d="M9.500 0.500H15.500V6.500l-2.200-2.200-4.800 4.800-1.600-1.600 4.800-4.800z" fill="#2f97d8"/></svg></div>
<div class="abs td" style="left:435.5px;width:36.89999999999998px;top:429.98px;text-align:center;color:#666;font-size:8.400px">8,100</div>
<svg class="abs" style="left:470px;top:422.1px" width="64" height="28.75" viewBox="470 422.1 64 28.75"><path d="M478.2 436.2 L479.6 429.8 L482.7 429.6 L484.6 432.6 L485.1 433.1 L486.0 444.8 L487.3 445.3 L489.0 442.0 L490.7 435.9 L492.3 439.8 L494.6 442.6 L497.0 438.7 L499.0 442.6 L501.2 440.3 L503.4 440.3 L505.7 442.6 L507.9 442.6 L509.6 440.3 L511.8 440.3 L514.0 442.6 L515.7 427.6 L517.3 443.1 L519.6 442.2 L521.8 445.3 L528.4 445.3 L528.4 445.1 L478.2 445.1 Z" fill="#c9e5f7"/><path d="M478.2 436.2 L479.6 429.8 L482.7 429.6 L484.6 432.6 L485.1 433.1 L486.0 444.8 L487.3 445.3 L489.0 442.0 L490.7 435.9 L492.3 439.8 L494.6 442.6 L497.0 438.7 L499.0 442.6 L501.2 440.3 L503.4 440.3 L505.7 442.6 L507.9 442.6 L509.6 440.3 L511.8 440.3 L514.0 442.6 L515.7 427.6 L517.3 443.1 L519.6 442.2 L521.8 445.3 L528.4 445.3" fill="none" stroke="#72b9e8" stroke-width="1.100" stroke-linejoin="round"/></svg>
<div class="icn" style="left:556px;top:432.48px"><svg width="7" height="9" viewBox="0 0 14 18"><path d="M1 1h8l4 4v12H1z" fill="#e9f4fc" stroke="#3f9fdd" stroke-width="1.400"/><path d="M9 1v4h4" fill="none" stroke="#3f9fdd" stroke-width="1.200"/><path d="M4 8.500h6M4 11h6M4 13.500h6" stroke="#3f9fdd" stroke-width="1.200"/></svg></div>
<div class="icn" style="left:613.4px;top:433.28px"><svg width="12.5" height="8" viewBox="0 0 25 16"><path d="M0 0h2.400v9.500H25V16h-2.400v-3H2.400v3H0z" fill="#5a5a5a"/><circle cx="6" cy="5.500" r="2.300" fill="#5a5a5a"/><path d="M10 3.500h11.500a3.500 3.500 0 0 1 3.500 3.500v1.300H10z" fill="#5a5a5a"/></svg></div>
<div class="icn" style="left:633.2px;top:432.78px"><svg width="11" height="9" viewBox="0 0 22 18"><ellipse cx="8.500" cy="6.500" rx="8.500" ry="6.200" fill="#5a5a5a"/><path d="M2 10l-1.500 5 6-3z" fill="#5a5a5a"/><path d="M19.500 6.500c1.500 1 2.500 2.600 2.500 4.300 0 1.700-1 3.200-2.500 4.200l1.300 2.800-4.300-1.700c-3 .6-6.300-.2-8-1.800 6 .3 11.500-2.600 11-7.800z" fill="#5a5a5a"/></svg></div>
<div class="icn" style="left:651.2px;top:432.28px"><svg width="12" height="10" viewBox="0 0 24 20"><rect x="1" y="1" width="22" height="18" rx="2" fill="#f0f0f0" stroke="#5a5a5a" stroke-width="1.600"/><circle cx="6.500" cy="6.500" r="2" fill="#5a5a5a"/><path d="M3.500 16.500v-3l4-4 3 3 5-6 5 5v5z" fill="#5a5a5a"/></svg></div>
<div class="icn" style="left:670.5px;top:432.53px"><svg width="10" height="9.500" viewBox="0 0 20 19"><path d="M10 0l3.100 6.300 6.900 1-5 4.900 1.200 6.800L10 15.800 3.800 19 5 12.200 0 7.300l6.900-1z" fill="#5a5a5a"/></svg></div>
<div class="abs td" style="left:16.5px;top:460.12px;color:#2f97d8;font-size:8.200px">5 star hotel paris</div>
<div class="abs td" style="left:139.4px;width:40.5px;top:458.73px;text-align:center;color:#666;font-size:8.400px">15</div>
<div class="abs bdg r" style="left:190.300px;top:459.53px;margin:0;width:30px;min-width:0;height:12.500px;padding:0;border-width:1.300px;font-size:8.600px;line-height:10.400px;text-align:left"><span class="icn" style="left:5.40px;top:2.17px"><svg width="7" height="7" viewBox="0 0 14 14"><circle cx="7" cy="7" r="7" fill="#e8474c"/><path d="M7 2L12 7H9.200V12H4.800V7H2Z" fill="#fff" transform="rotate(180 7 7)"/></svg></span><span style="position:absolute;left:16.500px;top:0">3</span></div>
<div class="abs td" style="left:233.3px;top:458.83px;color:#2f97d8;font-size:8.3px;letter-spacing:-0.075px"><span style="display:inline-block;width:4px;height:4px;border-radius:50%;border:1.200px solid #2f97d8;background:#2f97d8;margin-right:2.200px;position:relative;top:-0.900px"></span>https://www.example.com/5Star-Paris-Hotels....</div>
<div class="icn" style="left:418.3px;top:460.93px"><svg width="8" height="7.500" viewBox="0 0 16 15"><path d="M11.500 8.500v4a1.500 1.500 0 0 1-1.500 1.500H2.500A1.500 1.500 0 0 1 1 12.500V5a1.500 1.500 0 0 1 1.500-1.500h5" fill="none" stroke="#2f97d8" stroke-width="1.500"/><path d="M9.500 0.500H15.500V6.500l-2.200-2.200-4.800 4.800-1.600-1.600 4.800-4.800z" fill="#2f97d8"/></svg></div>
<div class="abs td" style="left:435.5px;width:36.89999999999998px;top:458.73px;text-align:center;color:#666;font-size:8.400px">880</div>
<svg class="abs" style="left:470px;top:450.85px" width="64" height="28.75" viewBox="470 450.85 64 28.75"><path d="M478.2 459.8 L482.9 459.8 L483.8 466.4 L486.2 467.0 L488.4 470.3 L489.6 466.4 L490.7 456.4 L492.0 470.9 L493.1 473.7 L494.6 470.3 L501.2 470.3 L503.1 463.3 L504.2 469.8 L505.3 473.7 L507.3 467.0 L509.0 470.3 L511.8 465.9 L513.4 463.3 L514.9 470.9 L516.0 473.7 L517.9 467.0 L519.6 470.3 L521.8 470.3 L523.4 467.0 L526.2 467.0 L527.3 470.3 L528.4 470.9 L528.4 473.7 L478.2 473.7 Z" fill="#c9e5f7"/><path d="M478.2 459.8 L482.9 459.8 L483.8 466.4 L486.2 467.0 L488.4 470.3 L489.6 466.4 L490.7 456.4 L492.0 470.9 L493.1 473.7 L494.6 470.3 L501.2 470.3 L503.1 463.3 L504.2 469.8 L505.3 473.7 L507.3 467.0 L509.0 470.3 L511.8 465.9 L513.4 463.3 L514.9 470.9 L516.0 473.7 L517.9 467.0 L519.6 470.3 L521.8 470.3 L523.4 467.0 L526.2 467.0 L527.3 470.3 L528.4 470.9" fill="none" stroke="#72b9e8" stroke-width="1.100" stroke-linejoin="round"/></svg>
<div class="icn" style="left:556px;top:461.23px"><svg width="7" height="9" viewBox="0 0 14 18"><path d="M1 1h8l4 4v12H1z" fill="#e9f4fc" stroke="#3f9fdd" stroke-width="1.400"/><path d="M9 1v4h4" fill="none" stroke="#3f9fdd" stroke-width="1.200"/><path d="M4 8.500h6M4 11h6M4 13.500h6" stroke="#3f9fdd" stroke-width="1.200"/></svg></div>
<div class="icn" style="left:603.9px;top:463.33px"><svg width="12.5" height="8" viewBox="0 0 25 16"><path d="M0 0h2.400v9.500H25V16h-2.400v-3H2.400v3H0z" fill="#5a5a5a"/><circle cx="6" cy="5.500" r="2.300" fill="#5a5a5a"/><path d="M10 3.500h11.500a3.500 3.500 0 0 1 3.500 3.500v1.300H10z" fill="#5a5a5a"/></svg></div>
<div class="icn" style="left:624.5px;top:462.33px"><svg width="8" height="11" viewBox="0 0 8 11" style="margin-left:-1px"><text x="4" y="9" text-anchor="middle" font-family="Liberation Sans, sans-serif" font-weight="bold" font-size="11" fill="#5a5a5a" stroke="#5a5a5a" stroke-width="0.500">?</text></svg></div>
<div class="abs" style="left:631.5px;top:460.925px;font-size:6.200px;line-height:6px;color:#999">2</div>
<div class="icn" style="left:643.2px;top:462.83px"><svg width="11" height="9" viewBox="0 0 22 18"><ellipse cx="8.500" cy="6.500" rx="8.500" ry="6.200" fill="#5a5a5a"/><path d="M2 10l-1.500 5 6-3z" fill="#5a5a5a"/><path d="M19.500 6.500c1.500 1 2.500 2.600 2.500 4.300 0 1.700-1 3.200-2.500 4.200l1.300 2.800-4.300-1.700c-3 .6-6.300-.2-8-1.800 6 .3 11.500-2.600 11-7.800z" fill="#5a5a5a"/></svg></div>
<div class="icn" style="left:661.2px;top:463.33px"><svg width="11" height="7.500" viewBox="0 0 23 16"><rect x="0" y="0" width="15" height="16" rx="3" fill="#5a5a5a"/><path d="M16 5.500L23 0.500v15L16 10.500z" fill="#5a5a5a"/></svg></div>
<div class="icn" style="left:679.8px;top:462.58px"><svg width="10" height="9.500" viewBox="0 0 20 19"><path d="M10 0l3.100 6.300 6.900 1-5 4.900 1.200 6.800L10 15.800 3.800 19 5 12.200 0 7.300l6.900-1z" fill="#5a5a5a"/></svg></div>
<div class="abs td" style="left:16.5px;top:488.88px;color:#2f97d8;font-size:8.200px">5 star hotels</div>
<div class="abs td" style="left:139.4px;width:40.5px;top:487.48px;text-align:center;color:#666;font-size:8.400px">7</div>
<div class="abs bdg " style="left:190.300px;top:488.28px;margin:0;width:30px;min-width:0;height:12.500px;padding:0;border-width:1.300px;font-size:8.600px;line-height:10.400px;text-align:left"><span class="icn" style="left:5.40px;top:2.42px"><svg width="7" height="7" viewBox="0 0 14 14"><circle cx="7" cy="7" r="7" fill="#1aa179"/><path d="M7 2L12 7H9.200V12H4.800V7H2Z" fill="#fff" transform="rotate(0 7 7)"/></svg></span><span style="position:absolute;left:16.500px;top:0">6</span></div>
<div class="abs td" style="left:233.3px;top:487.58px;color:#2f97d8;font-size:8.3px;letter-spacing:-0.075px"><span style="display:inline-block;width:4.6px;height:4.6px;border-radius:50%;border:1.200px solid #2f97d8;background:transparent;margin-right:2.200px;position:relative;top:-0.900px"></span>https://www.example.com/5Star-Los-Angeles-...</div>
<div class="icn" style="left:418.3px;top:489.68px"><svg width="8" height="7.500" viewBox="0 0 16 15"><path d="M11.500 8.500v4a1.500 1.500 0 0 1-1.500 1.500H2.500A1.500 1.500 0 0 1 1 12.500V5a1.500 1.500 0 0 1 1.500-1.500h5" fill="none" stroke="#2f97d8" stroke-width="1.500"/><path d="M9.500 0.500H15.500V6.500l-2.200-2.200-4.800 4.800-1.600-1.600 4.800-4.800z" fill="#2f97d8"/></svg></div>
<div class="abs td" style="left:435.5px;width:36.89999999999998px;top:487.48px;text-align:center;color:#666;font-size:8.400px">22,200</div>
<svg class="abs" style="left:470px;top:479.6px" width="64" height="28.75" viewBox="470 479.6 64 28.75"><path d="M478.2 498.9 L480.1 498.9 L481.8 500.6 L484.6 500.6 L485.7 493.3 L486.4 485.3 L489.0 485.3 L489.8 493.3 L490.7 500.6 L492.3 502.8 L493.8 502.2 L494.6 488.0 L499.6 488.0 L500.4 501.1 L501.6 502.8 L505.7 502.8 L506.4 496.7 L507.3 485.3 L518.4 485.3 L519.3 493.3 L520.1 498.3 L521.2 493.3 L522.3 490.0 L524.0 485.3 L528.4 485.3 L528.4 502.8 L478.2 502.8 Z" fill="#c9e5f7"/><path d="M478.2 498.9 L480.1 498.9 L481.8 500.6 L484.6 500.6 L485.7 493.3 L486.4 485.3 L489.0 485.3 L489.8 493.3 L490.7 500.6 L492.3 502.8 L493.8 502.2 L494.6 488.0 L499.6 488.0 L500.4 501.1 L501.6 502.8 L505.7 502.8 L506.4 496.7 L507.3 485.3 L518.4 485.3 L519.3 493.3 L520.1 498.3 L521.2 493.3 L522.3 490.0 L524.0 485.3 L528.4 485.3" fill="none" stroke="#72b9e8" stroke-width="1.100" stroke-linejoin="round"/></svg>
<div class="icn" style="left:556px;top:489.98px"><svg width="7" height="9" viewBox="0 0 14 18"><path d="M1 1h8l4 4v12H1z" fill="#e9f4fc" stroke="#3f9fdd" stroke-width="1.400"/><path d="M9 1v4h4" fill="none" stroke="#3f9fdd" stroke-width="1.200"/><path d="M4 8.500h6M4 11h6M4 13.500h6" stroke="#3f9fdd" stroke-width="1.200"/></svg></div>
<div class="icn" style="left:596.5px;top:489.58px"><svg width="12" height="10" viewBox="0 0 24 20"><path d="M0 1.500v6.500l10.500 11 7-7L7 1.500zM3.500 3.500a1.500 1.500 0 1 1 0 3 1.500 1.500 0 0 1 0-3z" fill="#5a5a5a" fill-rule="evenodd"/><path d="M10 1.500h2.500L23 12l-7 7-1.300-1.300L20.500 12z" fill="#5a5a5a"/></svg></div>
<div class="icn" style="left:615.4px;top:490.58px"><svg width="12.5" height="8" viewBox="0 0 25 16"><path d="M0 0h2.400v9.500H25V16h-2.400v-3H2.400v3H0z" fill="#5a5a5a"/><circle cx="6" cy="5.500" r="2.300" fill="#5a5a5a"/><path d="M10 3.500h11.500a3.500 3.500 0 0 1 3.500 3.500v1.300H10z" fill="#5a5a5a"/></svg></div>
<div class="icn" style="left:635.4px;top:490.08px"><svg width="11" height="9" viewBox="0 0 22 18"><ellipse cx="8.500" cy="6.500" rx="8.500" ry="6.200" fill="#5a5a5a"/><path d="M2 10l-1.500 5 6-3z" fill="#5a5a5a"/><path d="M19.500 6.500c1.500 1 2.500 2.600 2.500 4.300 0 1.700-1 3.200-2.500 4.200l1.300 2.800-4.300-1.700c-3 .6-6.300-.2-8-1.800 6 .3 11.500-2.600 11-7.800z" fill="#5a5a5a"/></svg></div>
<div class="icn" style="left:654.3px;top:489.58px"><svg width="8" height="11" viewBox="0 0 8 11" style="margin-left:-1px"><text x="4" y="9" text-anchor="middle" font-family="Liberation Sans, sans-serif" font-weight="bold" font-size="11" fill="#5a5a5a" stroke="#5a5a5a" stroke-width="0.500">?</text></svg></div>
<div class="icn" style="left:667px;top:490.58px"><svg width="11" height="7.500" viewBox="0 0 23 16"><rect x="0" y="0" width="15" height="16" rx="3" fill="#5a5a5a"/><path d="M16 5.500L23 0.500v15L16 10.500z" fill="#5a5a5a"/></svg></div>
<div class="icn" style="left:685.4px;top:489.58px"><svg width="12" height="10" viewBox="0 0 24 20"><rect x="1" y="1" width="22" height="18" rx="2" fill="#f0f0f0" stroke="#5a5a5a" stroke-width="1.600"/><circle cx="6.500" cy="6.500" r="2" fill="#5a5a5a"/><path d="M3.500 16.500v-3l4-4 3 3 5-6 5 5v5z" fill="#5a5a5a"/></svg></div>
<div class="abs td" style="left:16.5px;top:517.62px;color:#2f97d8;font-size:8.200px">airport car rental</div>
<div class="abs td" style="left:139.4px;width:40.5px;top:516.23px;text-align:center;color:#666;font-size:8.400px">4</div>
<div class="abs bdg g" style="left:190.300px;top:517.02px;margin:0;width:30px;min-width:0;height:12.500px;padding:0;border-width:1.300px;font-size:8.600px;line-height:10.400px;text-align:left"><span class="icn" style="left:5.40px;top:1.68px"><svg width="7" height="7" viewBox="0 0 14 14"><circle cx="7" cy="7" r="7" fill="#444"/><path d="M7 2L12 7H9.200V12H4.800V7H2Z" fill="#fff" transform="rotate(90 7 7)"/></svg></span><span style="position:absolute;left:16.500px;top:0">0</span></div>
<div class="abs td" style="left:233.3px;top:516.33px;color:#2f97d8;font-size:8.3px;letter-spacing:0px"><span style="display:inline-block;width:4px;height:4px;border-radius:50%;border:1.200px solid #2f97d8;background:#2f97d8;margin-right:2.200px;position:relative;top:-0.900px"></span>https://www.example.com/Cars</div>
<div class="icn" style="left:358.7px;top:518.43px"><svg width="8" height="7.500" viewBox="0 0 16 15"><path d="M11.500 8.500v4a1.500 1.500 0 0 1-1.500 1.500H2.500A1.500 1.500 0 0 1 1 12.500V5a1.500 1.500 0 0 1 1.500-1.500h5" fill="none" stroke="#2f97d8" stroke-width="1.500"/><path d="M9.500 0.500H15.500V6.500l-2.200-2.200-4.800 4.800-1.600-1.600 4.800-4.800z" fill="#2f97d8"/></svg></div>
<div class="abs td" style="left:435.5px;width:36.89999999999998px;top:516.23px;text-align:center;color:#666;font-size:8.400px">40,500</div>
<svg class="abs" style="left:470px;top:508.35px" width="64" height="28.75" viewBox="470 508.35 64 28.75"><path d="M478.2 518.3 L480.1 513.7 L484.6 513.7 L486.4 518.3 L488.2 513.7 L495.7 513.7 L497.3 518.3 L498.7 513.7 L499.6 513.7 L500.4 526.7 L501.2 531.1 L502.3 524.4 L503.1 513.7 L513.4 513.7 L514.2 517.8 L515.7 527.2 L517.3 522.2 L518.4 517.8 L519.8 513.7 L521.2 518.3 L528.4 518.3 L528.4 531.1 L478.2 531.1 Z" fill="#c9e5f7"/><path d="M478.2 518.3 L480.1 513.7 L484.6 513.7 L486.4 518.3 L488.2 513.7 L495.7 513.7 L497.3 518.3 L498.7 513.7 L499.6 513.7 L500.4 526.7 L501.2 531.1 L502.3 524.4 L503.1 513.7 L513.4 513.7 L514.2 517.8 L515.7 527.2 L517.3 522.2 L518.4 517.8 L519.8 513.7 L521.2 518.3 L528.4 518.3" fill="none" stroke="#72b9e8" stroke-width="1.100" stroke-linejoin="round"/></svg>
<div class="icn" style="left:556px;top:518.73px"><svg width="7" height="9" viewBox="0 0 14 18"><path d="M1 1h8l4 4v12H1z" fill="#e9f4fc" stroke="#3f9fdd" stroke-width="1.400"/><path d="M9 1v4h4" fill="none" stroke="#3f9fdd" stroke-width="1.200"/><path d="M4 8.500h6M4 11h6M4 13.500h6" stroke="#3f9fdd" stroke-width="1.200"/></svg></div>
<div class="icn" style="left:593.2px;top:519.83px"><svg width="12" height="10" viewBox="0 0 24 20"><path d="M0 1.500v6.500l10.500 11 7-7L7 1.500zM3.500 3.500a1.500 1.500 0 1 1 0 3 1.500 1.500 0 0 1 0-3z" fill="#5a5a5a" fill-rule="evenodd"/><path d="M10 1.500h2.500L23 12l-7 7-1.300-1.300L20.500 12z" fill="#5a5a5a"/></svg></div>
<div class="abs" style="left:606.7px;top:518.4250000000001px;font-size:6.200px;line-height:6px;color:#999">4</div>
<div class="icn" style="left:617.4px;top:520.08px"><svg width="6" height="9.500" viewBox="0 0 12 19"><path d="M6 0a6 6 0 0 1 6 6c0 3.500-4 8-6 13C4 14 0 9.500 0 6a6 6 0 0 1 6-6zm0 3a3 3 0 1 0 0 6 3 3 0 0 0 0-6z" fill="#5a5a5a" fill-rule="evenodd"/></svg></div>
<div class="icn" style="left:631.2px;top:523.33px"><svg width="10" height="3" viewBox="0 0 20 6"><circle cx="3" cy="3" r="2.700" fill="#5a5a5a"/><circle cx="10" cy="3" r="2.700" fill="#5a5a5a"/><circle cx="17" cy="3" r="2.700" fill="#5a5a5a"/></svg></div>
<div class="abs" style="left:642.2px;top:518.4250000000001px;font-size:6.200px;line-height:6px;color:#999">2</div>
<div class="icn" style="left:652.7px;top:520.33px"><svg width="11" height="9" viewBox="0 0 22 18"><ellipse cx="8.500" cy="6.500" rx="8.500" ry="6.200" fill="#5a5a5a"/><path d="M2 10l-1.500 5 6-3z" fill="#5a5a5a"/><path d="M19.500 6.500c1.500 1 2.500 2.600 2.500 4.300 0 1.700-1 3.200-2.500 4.200l1.300 2.800-4.300-1.700c-3 .6-6.300-.2-8-1.800 6 .3 11.500-2.600 11-7.800z" fill="#5a5a5a"/></svg></div>
<div class="icn" style="left:671px;top:520.33px"><svg width="12" height="9" viewBox="0 0 24 18"><rect x="1" y="1" width="22" height="16" rx="1.500" fill="#e4e4e4" stroke="#888" stroke-width="1.600"/><rect x="8" y="4" width="8" height="6" fill="#f7f7f7" stroke="#999" stroke-width="1"/><path d="M3.500 5h3M3.500 9h3M3.500 13h3M18 5h3M18 9h3M18 13h3M9 13h6" stroke="#999" stroke-width="1.200"/></svg></div>
<div class="icn" style="left:691px;top:520.08px"><svg width="10" height="9.500" viewBox="0 0 20 19"><path d="M10 0l3.100 6.300 6.900 1-5 4.900 1.200 6.800L10 15.800 3.800 19 5 12.200 0 7.300l6.900-1z" fill="#5a5a5a"/></svg></div>
</div>
</body></html>
